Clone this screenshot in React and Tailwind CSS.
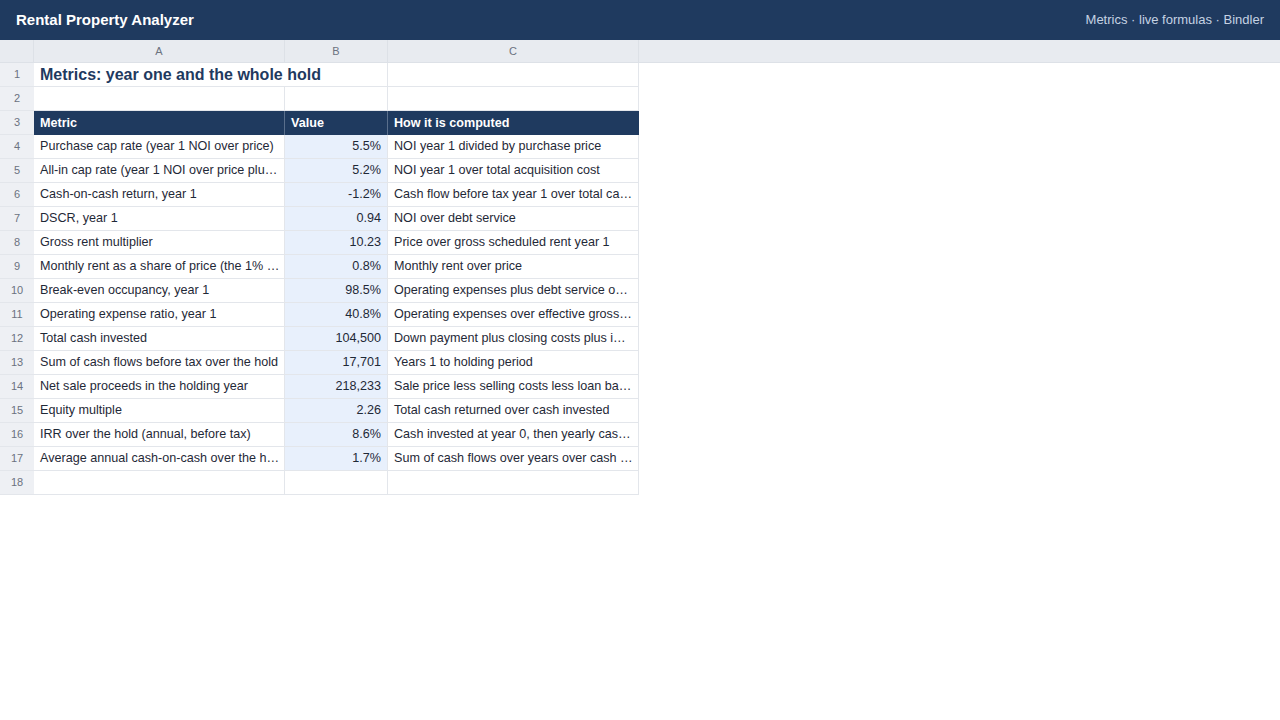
// App.jsx - Rental Property Analyzer, metrics sheet
const rows = [
  ["Purchase cap rate (year 1 NOI over price)", "5.5%", "NOI year 1 divided by purchase price"],
  ["All-in cap rate (year 1 NOI over price plu…", "5.2%", "NOI year 1 over total acquisition cost"],
  ["Cash-on-cash return, year 1", "-1.2%", "Cash flow before tax year 1 over total ca…"],
  ["DSCR, year 1", "0.94", "NOI over debt service"],
  ["Gross rent multiplier", "10.23", "Price over gross scheduled rent year 1"],
  ["Monthly rent as a share of price (the 1% …", "0.8%", "Monthly rent over price"],
  ["Break-even occupancy, year 1", "98.5%", "Operating expenses plus debt service o…"],
  ["Operating expense ratio, year 1", "40.8%", "Operating expenses over effective gross…"],
  ["Total cash invested", "104,500", "Down payment plus closing costs plus i…"],
  ["Sum of cash flows before tax over the hold", "17,701", "Years 1 to holding period"],
  ["Net sale proceeds in the holding year", "218,233", "Sale price less selling costs less loan ba…"],
  ["Equity multiple", "2.26", "Total cash returned over cash invested"],
  ["IRR over the hold (annual, before tax)", "8.6%", "Cash invested at year 0, then yearly cas…"],
  ["Average annual cash-on-cash over the h…", "1.7%", "Sum of cash flows over years over cash …"],
];

const cols = "grid grid-cols-[34px_251px_103px_251px]";

function RowNum({ n }) {
  return (
    <div className="h-6 flex items-center justify-center bg-[#eef0f4] border-b border-[#e3e6eb] text-[11px] text-[#6b7280]">
      {n}
    </div>
  );
}

export default function App() {
  return (
    <div className="min-h-screen bg-white font-['Liberation_Sans',Arial,sans-serif] text-[#1f2937]">
      {/* top bar */}
      <header className="h-10 bg-[#1f3a5f] flex items-center justify-between px-4">
        <div className="text-white font-bold text-[15px]">Rental Property Analyzer</div>
        <div className="text-[#c5d2e3] text-[13px]">Metrics · live formulas · Bindler</div>
      </header>

      {/* column letters */}
      <div className="h-[23px] bg-[#e8ebf0] border-b border-[#dde1e7]">
        <div className={cols + " h-full"}>
          <div className="border-r border-[#dde1e7]" />
          <div className="flex items-center justify-center text-[11px] text-[#6b7280] border-r border-[#dde1e7]">A</div>
          <div className="flex items-center justify-center text-[11px] text-[#6b7280] border-r border-[#dde1e7]">B</div>
          <div className="flex items-center justify-center text-[11px] text-[#6b7280] border-r border-[#dde1e7]">C</div>
        </div>
      </div>

      <div className={cols}>
        {/* row 1 title */}
        <RowNum n={1} />
        <div className="col-span-2 h-6 flex items-center px-1.5 border-b border-r border-[#e3e6eb] text-[16px] font-bold text-[#1f3a5f] whitespace-nowrap">
          Metrics: year one and the whole hold
        </div>
        <div className="h-6 border-b border-r border-[#e3e6eb]" />

        {/* row 2 */}
        <RowNum n={2} />
        <div className="h-6 border-b border-r border-[#e3e6eb]" />
        <div className="h-6 border-b border-r border-[#e3e6eb]" />
        <div className="h-6 border-b border-r border-[#e3e6eb]" />

        {/* row 3 header */}
        <RowNum n={3} />
        <div className="h-6 flex items-center px-1.5 bg-[#1f3a5f] border-r border-[#5a6f8c] text-white text-[12.6px] font-bold">Metric</div>
        <div className="h-6 flex items-center px-1.5 bg-[#1f3a5f] border-r border-[#5a6f8c] text-white text-[12.6px] font-bold">Value</div>
        <div className="h-6 flex items-center px-1.5 bg-[#1f3a5f] text-white text-[12.6px] font-bold">How it is computed</div>

        {rows.map(([metric, value, how], i) => (
          <div key={i} className="contents">
            <RowNum n={i + 4} />
            <div className="h-6 flex items-center pl-1.5 pr-1 border-b border-r border-[#e3e6eb] text-[12.6px] whitespace-nowrap overflow-hidden">
              {metric}
            </div>
            <div className="h-6 flex items-center justify-end px-1.5 bg-[#e8f0fc] border-b border-r border-[#e3e6eb] text-[12.6px]">
              {value}
            </div>
            <div className="h-6 flex items-center pl-1.5 pr-1 border-b border-r border-[#e3e6eb] text-[12.6px] whitespace-nowrap overflow-hidden">
              {how}
            </div>
          </div>
        ))}

        {/* row 18 */}
        <RowNum n={18} />
        <div className="h-6 border-b border-r border-[#e3e6eb]" />
        <div className="h-6 border-b border-r border-[#e3e6eb]" />
        <div className="h-6 border-b border-r border-[#e3e6eb]" />
      </div>
    </div>
  );
}
